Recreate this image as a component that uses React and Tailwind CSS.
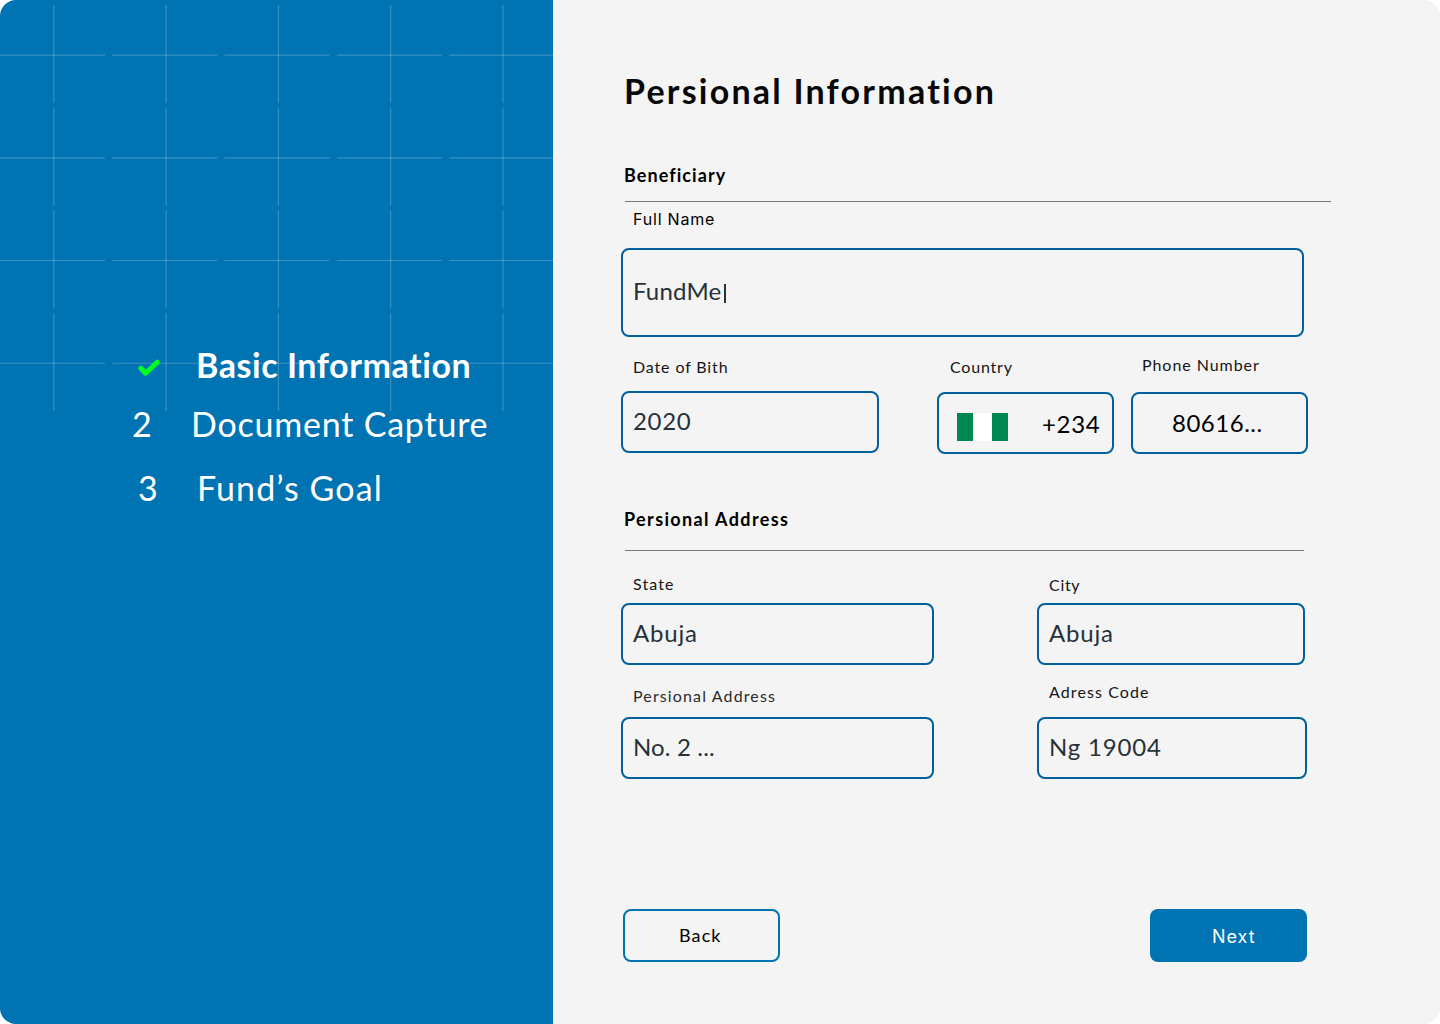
import clsx from "clsx";

const columns = [53.8, 166.1, 278.4, 390.7, 503];
const rows = [55.1, 157.8, 260.5, 363.2];

function GridPattern() {
  return (
    <svg
      className="absolute left-0 top-0"
      width="553"
      height="420"
      stroke="white"
      strokeOpacity="0.22"
      strokeWidth="1.15"
      aria-hidden="true"
    >
      {columns.map((x) =>
        rows.map((y) => (
          <g key={`${x}-${y}`}>
            <path d={`M${x} ${y - 50}v97.8`} />
            <path d={`M${x - 53.8} ${y}h105`} />
          </g>
        ))
      )}
    </svg>
  );
}

function Step({ marker, className, labelClassName, children }) {
  return (
    <li className={clsx("flex h-10 leading-10 whitespace-nowrap text-[34px]", className)}>
      {marker}
      <span className={labelClassName}>{children}</span>
    </li>
  );
}

function Field({ label, labelClassName, boxClassName, className, children }) {
  return (
    <label className={clsx("flex flex-col", className)}>
      <span className={clsx("block h-5 text-base leading-5 whitespace-nowrap", labelClassName)}>
        {label}
      </span>
      <span
        className={clsx(
          "flex items-center rounded-lg border-2 border-[#00609b] text-2xl whitespace-nowrap",
          boxClassName
        )}
      >
        {children}
      </span>
    </label>
  );
}

function NigeriaFlag() {
  return (
    <span className="mt-[7px] flex h-7 w-[51px]">
      <span className="w-4 bg-[#008751]" />
      <span className="w-[19px] bg-white" />
      <span className="w-4 bg-[#008751]" />
    </span>
  );
}

export default function App() {
  return (
    <div className="h-[1024px] w-[1440px] bg-white font-['Lato',sans-serif]">
      <div className="flex h-full w-full overflow-hidden rounded-2xl bg-[#f4f4f4]">
        <aside className="relative w-[553px] shrink-0 bg-[#0073b3] text-white">
          <GridPattern />
          <ol className="relative pt-[345px]">
            <Step
              className="pl-[138px] font-bold"
              labelClassName="ml-9 tracking-[0.56px]"
              marker={
                <svg
                  className="mt-3.5 h-[18px] w-[22px]"
                  viewBox="0 0 22 18"
                  fill="none"
                  stroke="#00ff20"
                  strokeWidth="5"
                  strokeLinecap="round"
                  strokeLinejoin="round"
                >
                  <path d="M2.9 9.2L7.6 14.2L19.2 3.2" />
                </svg>
              }
            >
              Basic Information
            </Step>
            <Step
              className="mt-[19px] pl-[132px]"
              labelClassName="tracking-[0.78px]"
              marker={<span className="w-[59px]">2</span>}
            >
              Document Capture
            </Step>
            <Step
              className="mt-6 pl-[138px]"
              labelClassName="tracking-[1.1px]"
              marker={<span className="w-[59px]">3</span>}
            >
              Fund’s Goal
            </Step>
          </ol>
        </aside>

        <main className="flex flex-1 flex-col pl-[68px] pt-[71px]">
          <h1 className="ml-[3px] h-10 text-[34px] leading-10 font-bold tracking-[2.22px] text-[#080808]">
            Persional Information
          </h1>

          <h2 className="mt-[52px] ml-[3px] h-6 text-lg leading-6 font-bold tracking-[1.06px] text-black">
            Beneficiary
          </h2>
          <div className="mt-3.5 ml-1 h-px w-[706px] bg-[#777777]" />
          <Field
            className="mt-[7px] w-[683px]"
            label="Full Name"
            labelClassName="ml-3 font-['Inter',sans-serif] tracking-[0.8px] text-black"
            boxClassName="mt-[19px] h-[89px] pl-2.5 pb-[3px] text-[#263238] tracking-[0.2px]"
          >
            FundMe
            <span className="ml-0.5 mt-[5px] h-[19px] w-[2.5px] bg-[#263238]" />
          </Field>

          <div className="mt-[18px] flex h-[99px] items-start">
            <Field
              className="mt-0.5 w-[258px]"
              label="Date of Bith"
              labelClassName="ml-3 tracking-[0.87px] text-[#151515]"
              boxClassName="mt-3.5 h-[62px] pl-2.5 pb-0.5 text-[#263238] tracking-[0.7px]"
            >
              2020
            </Field>
            <Field
              className="mt-0.5 ml-[58px] w-[177px]"
              label="Country"
              labelClassName="ml-[13px] tracking-[0.8px] text-[#151515]"
              boxClassName="mt-[15px] h-[62px] pl-[18px] text-black tracking-[0.7px]"
            >
              <NigeriaFlag />
              <span className="mt-0.5 ml-[34px]">+234</span>
            </Field>
            <Field
              className="ml-[17px] w-[177px]"
              label="Phone Number"
              labelClassName="ml-[11px] tracking-[0.94px] text-[#151515]"
              boxClassName="mt-[17px] h-[62px] pl-[39px] text-black tracking-[0.51px]"
            >
              80616...
            </Field>
          </div>

          <h2 className="mt-[53px] ml-[3px] h-6 text-lg leading-6 font-bold tracking-[1.37px] text-black">
            Persional Address
          </h2>
          <div className="mt-[19px] ml-1 h-px w-[679px] bg-[#777777]" />

          <div className="mt-[23px] flex items-start">
            <Field
              className="w-[313px]"
              label="State"
              labelClassName="ml-3 tracking-[1.1px] text-[#151515]"
              boxClassName="mt-[9px] h-[62px] pl-2.5 pb-0.5 text-[#263238] tracking-[0.8px]"
            >
              Abuja
            </Field>
            <Field
              className="mt-px ml-[103px] w-[268px]"
              label="City"
              labelClassName="ml-3 tracking-[0.7px] text-[#151515]"
              boxClassName="mt-2 h-[62px] pl-2.5 pb-0.5 text-[#263238] tracking-[0.8px]"
            >
              Abuja
            </Field>
          </div>

          <div className="mt-[17px] flex items-start">
            <Field
              className="mt-1 w-[313px]"
              label="Persional Address"
              labelClassName="ml-3 tracking-[1.13px] text-[#2b2b2b]"
              boxClassName="mt-[11px] h-[62px] pl-2.5 pb-0.5 text-[#263238] tracking-[0.15px]"
            >
              No. 2 ...
            </Field>
            <Field
              className="ml-[103px] w-[270px]"
              label="Adress Code"
              labelClassName="ml-3 tracking-[1.09px] text-[#151515]"
              boxClassName="mt-[15px] h-[62px] pl-2.5 pb-0.5 text-[#263238] tracking-[0.82px]"
            >
              Ng 19004
            </Field>
          </div>

          <div className="mt-[130px] ml-0.5 flex h-[53px] gap-[370px]">
            <button className="flex w-[157px] items-center rounded-lg border-2 border-[#0073b3] pb-0.5 pl-[54px] text-lg tracking-[1.1px] text-black">
              Back
            </button>
            <button className="flex w-[157px] items-center rounded-lg bg-[#0073b3] pt-[3px] pl-[62px] font-['Inter',sans-serif] text-lg tracking-[0.95px] text-white">
              Next
            </button>
          </div>
        </main>
      </div>
    </div>
  );
}
